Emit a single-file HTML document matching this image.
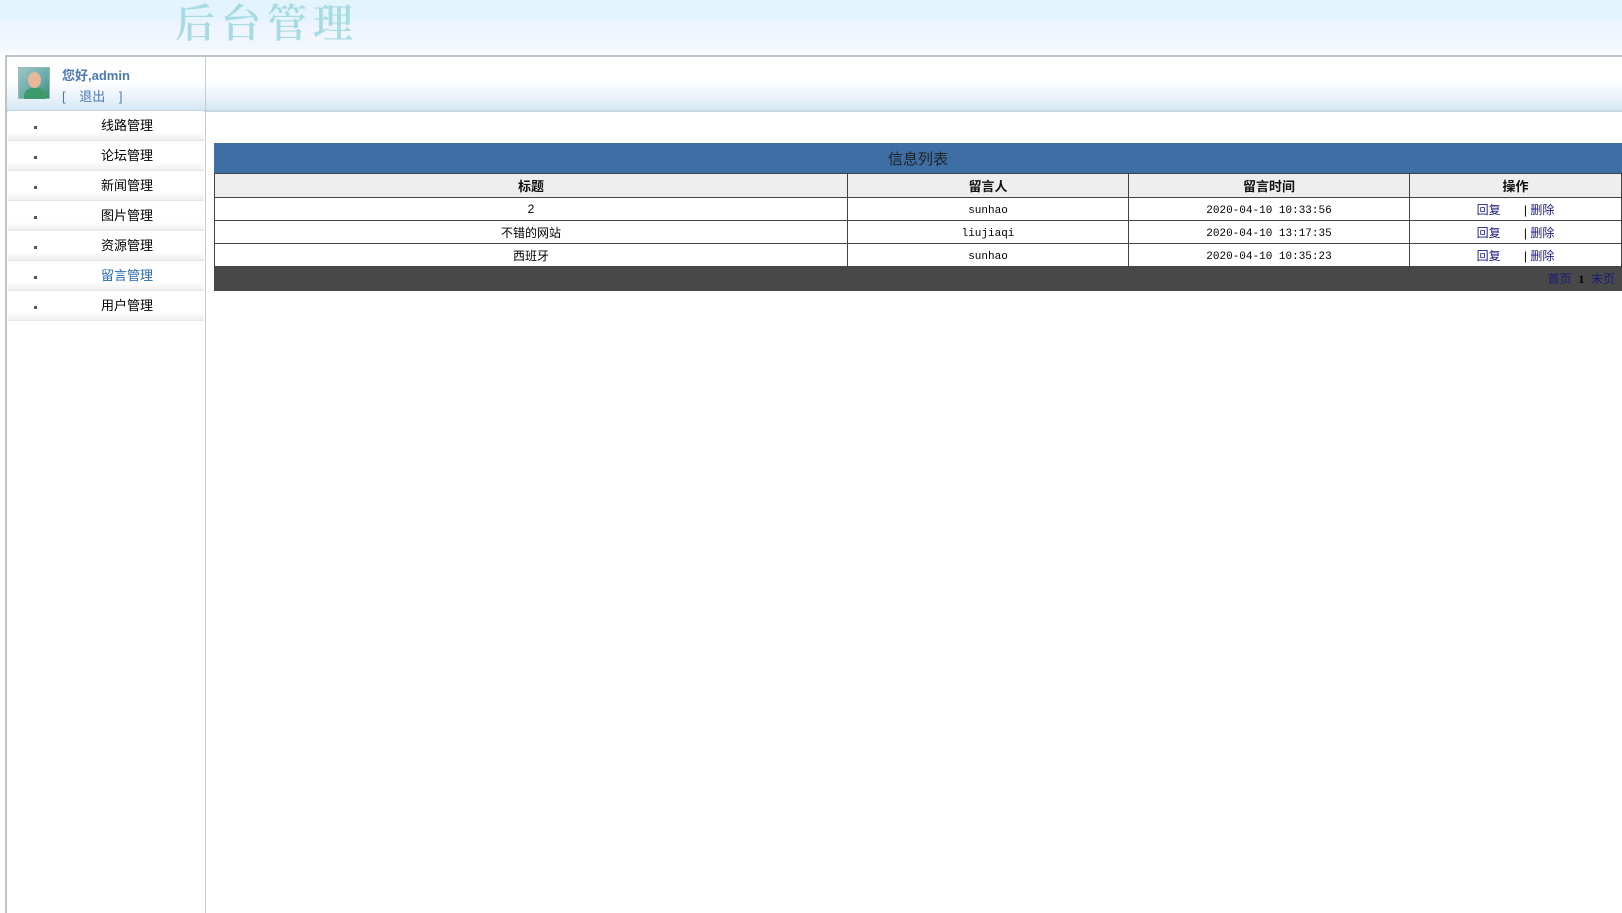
<!DOCTYPE html>
<html><head><meta charset="utf-8">
<style>
*{margin:0;padding:0;box-sizing:border-box}
body{width:1622px;height:913px;position:relative;background:#fff;font-family:"Liberation Sans","Noto Sans CJK SC",sans-serif;overflow:hidden}
.top{position:absolute;left:0;top:0;width:1622px;height:55px;background:linear-gradient(#e3f4fd 0,#e4f4fd 18px,#eef3fd 25px,#f3f8fe 48px,#fafcff 55px)}
.logo{position:absolute;left:175px;top:-8px;font-family:"Noto Serif CJK SC",serif;font-size:40px;color:#a6dbe3;letter-spacing:6px;font-weight:600}
.frame{position:absolute;left:5px;top:55px;width:1617px;height:858px;border-top:2px solid #bac4cd;border-left:2px solid #bac4cd}
.band{position:absolute;left:7px;top:57px;width:1615px;height:53px;background:linear-gradient(#fff 0,#fff 24px,#eaf3fa 40px,#d6e8f3 52px)}
.bandline{position:absolute;left:7px;top:110px;width:1615px;height:2px;background:#c6d6e2}
.vline{position:absolute;left:205px;top:57px;width:1px;height:856px;background:#c3ccd3}
.avatar{position:absolute;left:18px;top:67px;width:32px;height:32px;border:1px solid #9bb;background:linear-gradient(135deg,#9fc5c5,#6aa 60%,#3a8a6a)}
.avatar:before{content:"";position:absolute;left:9px;top:4px;width:13px;height:16px;border-radius:50%;background:#e8b898}
.avatar:after{content:"";position:absolute;left:5px;top:20px;width:22px;height:11px;border-radius:8px 8px 0 0;background:#3d9a6d}
.hello{position:absolute;left:62px;top:65px;font-size:13px;font-weight:bold;color:#4d79b3}
.out{position:absolute;left:62px;top:86px;font-size:13px;color:#4d79b3;word-spacing:10px}
.menu{position:absolute;left:8px;width:196px;height:30px;font-size:13px;color:#000;background:linear-gradient(#fff 0,#fff 70%,#f0f0f0 95%,#e2e2e2 100%)}
.menu span{position:absolute;left:93px;top:4px}
.menu i{position:absolute;left:26px;top:15px;width:3px;height:3px;background:#555}
table{position:absolute;left:214px;top:143px;width:1408px;border-collapse:collapse;font-size:12px}
td,th{border:1px solid #444;text-align:center;vertical-align:middle}
.tt td{background:#3d6fa5;height:30px;color:#222;font-size:15px;border-color:#3d6fa5 #3d6fa5 #444}
th{background:#eee;height:24px;font-size:13px;color:#111}
.r td{height:23px;background:#fff;color:#000}
.r td.mono{font-family:"Liberation Mono",monospace;font-size:11px;padding-top:3px}
.ft td{background:#484848;height:24px;text-align:right;color:#000;padding-right:6px;border-color:#484848}
a{color:#1a1a80;text-decoration:none}
</style></head><body>
<div class="top"><div class="logo">后台管理</div></div>
<div class="frame"></div>
<div class="band"></div>
<div class="bandline"></div>
<div class="vline"></div>
<div class="avatar"></div>
<div class="hello">您好,admin</div>
<div class="out">[ 退出 ]</div>
<div class="menu" style="top:111px"><i></i><span>线路管理</span></div>
<div class="menu" style="top:141px"><i></i><span>论坛管理</span></div>
<div class="menu" style="top:171px"><i></i><span>新闻管理</span></div>
<div class="menu" style="top:201px"><i></i><span>图片管理</span></div>
<div class="menu" style="top:231px"><i></i><span>资源管理</span></div>
<div class="menu" style="top:261px"><i></i><span style="color:#2a6ab0">留言管理</span></div>
<div class="menu" style="top:291px"><i></i><span>用户管理</span></div>
<table>
<tr class="tt"><td colspan="4">信息列表</td></tr>
<tr><th style="width:633px">标题</th><th style="width:281px">留言人</th><th style="width:281px">留言时间</th><th>操作</th></tr>
<tr class="r"><td>2</td><td class="mono">sunhao</td><td class="mono">2020-04-10 10:33:56</td><td><a>回复</a> &nbsp; &nbsp; &nbsp; | <a>删除</a></td></tr>
<tr class="r"><td>不错的网站</td><td class="mono">liujiaqi</td><td class="mono">2020-04-10 13:17:35</td><td><a>回复</a> &nbsp; &nbsp; &nbsp; | <a>删除</a></td></tr>
<tr class="r"><td>西班牙</td><td class="mono">sunhao</td><td class="mono">2020-04-10 10:35:23</td><td><a>回复</a> &nbsp; &nbsp; &nbsp; | <a>删除</a></td></tr>
<tr class="ft"><td colspan="4"><a>首页</a> &nbsp;<b style="font-family:'Liberation Serif',serif">1</b>&nbsp; <a>末页</a></td></tr>
</table>
</body></html>
